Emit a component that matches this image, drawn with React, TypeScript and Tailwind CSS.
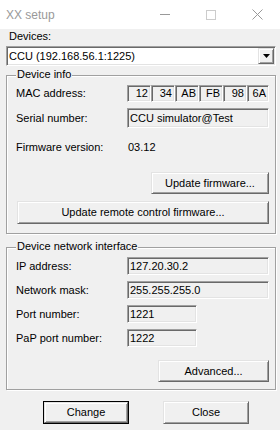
const font = { fontFamily: '"Liberation Sans", Arial, sans-serif' };

const sunken =
  'border border-t-[#a0a0a0] border-l-[#a0a0a0] border-b-white border-r-white shadow-[inset_1px_1px_0_#696969,inset_-1px_-1px_0_#e3e3e3]';
const raised =
  'border border-t-[#e3e3e3] border-l-[#e3e3e3] border-b-[#696969] border-r-[#696969] shadow-[inset_1px_1px_0_#ffffff,inset_-1px_-1px_0_#a0a0a0] bg-[#f0f0f0]';

function Button({ label, className }: { label: string; className: string }) {
  return (
    <div className={`${raised} ${className} flex items-center justify-center text-[11px] text-black`}>
      {label}
    </div>
  );
}

function Field({ value, className }: { value: string; className: string }) {
  return (
    <div className={`${sunken} ${className} flex items-center bg-[#f0f0f0] pl-[2px] text-[11px] text-black`}>
      {value}
    </div>
  );
}

function Group({ title, children, className }: { title: string; children: React.ReactNode; className: string }) {
  return (
    <div className={`relative border border-[#a0a0a0] shadow-[inset_1px_1px_0_#ffffff,1px_1px_0_#ffffff] ${className}`}>
      <span className="absolute left-[9px] top-[-8px] bg-[#f0f0f0] px-[1px] text-[11px] leading-[13px] text-black">
        {title}
      </span>
      {children}
    </div>
  );
}

const mac = ['12', '34', 'AB', 'FB', '98', '6A'];

export default function App() {
  return (
    <div className="w-[280px] h-[430px] bg-[#f0f0f0] overflow-hidden" style={font}>
      {/* Title bar */}
      <div className="flex h-[29px] items-center bg-white">
        <div className="flex-1 pl-[6px] text-[12px] text-[#999999]">XX setup</div>
        <div className="flex w-[46px] justify-center">
          <div className="h-px w-[10px] bg-[#999999]" />
        </div>
        <div className="flex w-[46px] justify-center">
          <svg width="10" height="10" viewBox="0 0 10 10">
            <rect x="0.5" y="0.5" width="9" height="9" fill="none" stroke="#cccccc" />
          </svg>
        </div>
        <div className="flex w-[46px] justify-center">
          <svg width="11" height="11" viewBox="0 0 11 11">
            <path d="M0.5 0.5 L10.5 10.5 M10.5 0.5 L0.5 10.5" stroke="#999999" strokeWidth="1" />
          </svg>
        </div>
      </div>

      <div className="pl-[6px] pr-[4px] text-[11px] leading-[13px] text-black">
        <div className="pl-[3px] pt-[1px]">Devices:</div>
        <div className={`${sunken} mt-[3px] flex h-[20px] items-center bg-white`}>
          <span className="flex-1 pl-[2px]">CCU (192.168.56.1:1225)</span>
          <div className={`${raised} mr-[1px] flex h-[16px] w-[16px] items-center justify-center`}>
            <svg width="7" height="4" viewBox="0 0 7 4">
              <path d="M0 0 H7 L3.5 4 Z" fill="#000" />
            </svg>
          </div>
        </div>

        {/* Device info */}
        <Group title="Device info" className="mt-[9px] pl-[9px] pr-[6px] pt-[9px] pb-[9px]">
          <div className="flex h-[17px] items-center">
            <div className="w-[111px]">MAC address:</div>
            <div className="flex">
              {mac.map((m, i) => (
                <div
                  key={m}
                  className={`${sunken} flex h-[17px] ${i === 5 ? 'w-[22px]' : 'w-[24px]'} items-center justify-end pr-[2px]`}
                >
                  {m}
                </div>
              ))}
            </div>
          </div>
          <div className="mt-[6px] flex h-[20px] items-center">
            <div className="w-[111px]">Serial number:</div>
            <Field value="CCU simulator@Test" className="h-[20px] flex-1" />
          </div>
          <div className="mt-[9px] flex h-[20px] items-center">
            <div className="w-[111px]">Firmware version:</div>
            <div className="pl-[1px]">03.12</div>
          </div>
          <div className="mt-[15px] flex justify-end">
            <Button label="Update firmware..." className="h-[22px] w-[118px]" />
          </div>
          <Button label="Update remote control firmware..." className="ml-[1px] mt-[7px] h-[23px]" />
        </Group>

        {/* Device network interface */}
        <Group title="Device network interface" className="mt-[13px] pl-[9px] pr-[6px] pt-[9px] pb-[7px]">
          <div className="flex h-[18px] items-center">
            <div className="w-[111px]">IP address:</div>
            <Field value="127.20.30.2" className="h-[18px] flex-1" />
          </div>
          <div className="mt-[6px] flex h-[18px] items-center">
            <div className="w-[111px]">Network mask:</div>
            <Field value="255.255.255.0" className="h-[18px] flex-1" />
          </div>
          <div className="mt-[6px] flex h-[18px] items-center">
            <div className="w-[111px]">Port number:</div>
            <Field value="1221" className="h-[18px] w-[70px]" />
          </div>
          <div className="mt-[6px] flex h-[18px] items-center">
            <div className="w-[111px]">PaP port number:</div>
            <Field value="1222" className="h-[18px] w-[70px]" />
          </div>
          <div className="mt-[13px] flex justify-end">
            <Button label="Advanced..." className="h-[22px] w-[111px]" />
          </div>
        </Group>

        {/* Footer buttons */}
        <div className="mt-[11px] flex pl-[37px]">
          <div className="border border-black">
            <Button label="Change" className="h-[21px] w-[84px]" />
          </div>
          <Button label="Close" className="ml-[34px] h-[23px] w-[86px]" />
        </div>
      </div>
    </div>
  );
}
